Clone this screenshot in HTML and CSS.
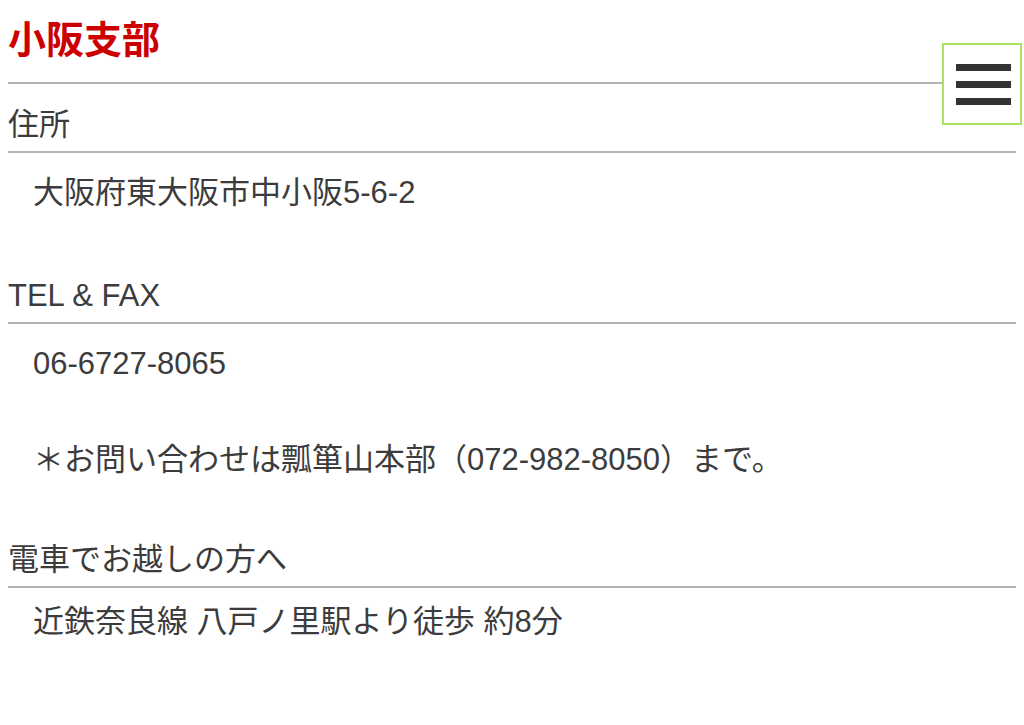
FILE: index.html
```html
<!DOCTYPE html>
<html lang="ja">
<head>
  <title>小阪支部</title>
  <meta charset="utf-8">
  <meta name="viewport" content="width=device-width, initial-scale=1">
  <link rel="stylesheet" href="styles.css">
</head>

<body>
  <button class="menu-toggle" type="button" aria-label="メニュー">
    <span class="menu-toggle__bar"></span>
    <span class="menu-toggle__bar"></span>
    <span class="menu-toggle__bar"></span>
  </button>

  <main class="branch">
    <h1 class="branch__title">小阪支部</h1>

    <section class="branch__section">
      <h2 class="branch__heading">住所</h2>
      <p class="branch__text">大阪府東大阪市中小阪5-6-2</p>
    </section>

    <section class="branch__section">
      <h2 class="branch__heading">TEL &amp; FAX</h2>
      <p class="branch__text">06-6727-8065</p>
      <p class="branch__text branch__text_note">＊お問い合わせは瓢箪山本部（072-982-8050）まで。</p>
    </section>

    <section class="branch__section branch__section_access">
      <h2 class="branch__heading">電車でお越しの方へ</h2>
      <p class="branch__text branch__text_close">近鉄奈良線 八戸ノ里駅より徒歩 約8分</p>
    </section>
  </main>
</body>
</html>
```

FILE: styles.css
```css
*,
*::before,
*::after {
  box-sizing: border-box;
  margin: 0;
  padding: 0;
}

body {
  padding: 0 8px;
  color: #3c3c3c;
  font-family: "Liberation Sans", "Noto Sans CJK JP", sans-serif;
  font-size: 31px;
  background-color: #FFFFFF;
}

.branch__title {
  padding-top: 16px;
  padding-bottom: 18px;
  border-bottom: 2px solid #b4b4b4;
  color: #cc0000;
  font-size: 38px;
  font-weight: 700;
  line-height: 48px;
}

.branch__section {
  margin-top: 19px;
}

.branch__section + .branch__section {
  margin-top: 59px;
}

.branch__section + .branch__section_access {
  margin-top: 56px;
}

.branch__heading {
  padding-bottom: 4px;
  border-bottom: 2px solid #b4b4b4;
  font-size: 31px;
  font-weight: 400;
  line-height: 44px;
}

.branch__text {
  margin-top: 18px;
  padding-left: 25px;
  line-height: 44px;
}

.branch__text_note {
  margin-top: 52px;
}

.branch__text_close {
  margin-top: 12px;
}

.menu-toggle {
  display: flex;
  flex-direction: column;
  justify-content: center;
  gap: 10px;
  position: absolute;
  top: 43px;
  left: 942px;
  width: 80px;
  height: 82px;
  padding: 0 12px;
  border: 2px solid #a6e25e;
  background-color: #FFFFFF;
  cursor: pointer;
}

.menu-toggle__bar {
  display: block;
  width: 55px;
  height: 7px;
  background-color: #333333;
}
```
